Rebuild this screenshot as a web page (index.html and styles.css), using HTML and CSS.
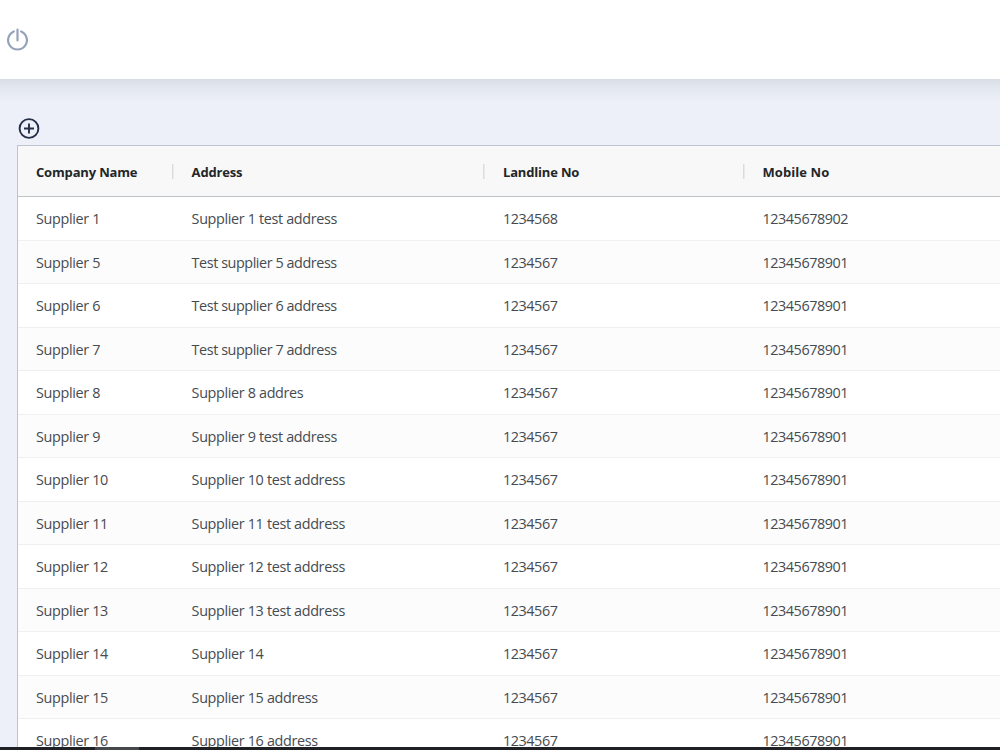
FILE: index.html
```
<!DOCTYPE html>
<html lang="en">
<head>
<meta charset="utf-8">
<title>Suppliers</title>
<link rel="stylesheet" href="styles.css">
</head>
<body>
<div class="app">
  <header class="topbar">
    <button class="icon-button" aria-label="Log out">
      <svg class="power-icon" viewBox="0 0 24 24"><path d="M8.2 3.6A9.8 9.8 0 1 0 15.8 3.6M12 1.6v11.4"/></svg>
    </button>
  </header>
  <main class="content">
    <button class="icon-button" aria-label="Add supplier">
      <svg class="add-icon" viewBox="0 0 22 22"><circle cx="11" cy="11.5" r="9.4"/><path d="M11 6.5v10M6 11.5h10"/></svg>
    </button>
    <div class="grid">
      <div class="row head"><span>Company Name</span><span>Address</span><span>Landline No</span><span class="wide">Mobile No</span></div>
      <div class="row"><span>Supplier 1</span><span>Supplier 1 test address</span><span class="num">1234568</span><span class="num">12345678902</span></div>
      <div class="row"><span>Supplier 5</span><span class="tight">Test supplier 5 address</span><span class="num">1234567</span><span class="num">12345678901</span></div>
      <div class="row"><span>Supplier 6</span><span class="tight">Test supplier 6 address</span><span class="num">1234567</span><span class="num">12345678901</span></div>
      <div class="row"><span>Supplier 7</span><span class="tight">Test supplier 7 address</span><span class="num">1234567</span><span class="num">12345678901</span></div>
      <div class="row"><span>Supplier 8</span><span>Supplier 8 addres</span><span class="num">1234567</span><span class="num">12345678901</span></div>
      <div class="row"><span>Supplier 9</span><span>Supplier 9 test address</span><span class="num">1234567</span><span class="num">12345678901</span></div>
      <div class="row"><span>Supplier 10</span><span>Supplier 10 test address</span><span class="num">1234567</span><span class="num">12345678901</span></div>
      <div class="row"><span>Supplier 11</span><span>Supplier 11 test address</span><span class="num">1234567</span><span class="num">12345678901</span></div>
      <div class="row"><span>Supplier 12</span><span>Supplier 12 test address</span><span class="num">1234567</span><span class="num">12345678901</span></div>
      <div class="row"><span>Supplier 13</span><span>Supplier 13 test address</span><span class="num">1234567</span><span class="num">12345678901</span></div>
      <div class="row"><span>Supplier 14</span><span>Supplier 14</span><span class="num">1234567</span><span class="num">12345678901</span></div>
      <div class="row"><span>Supplier 15</span><span>Supplier 15 address</span><span class="num">1234567</span><span class="num">12345678901</span></div>
      <div class="row"><span>Supplier 16</span><span>Supplier 16 address</span><span class="num">1234567</span><span class="num">12345678901</span></div>
    </div>
  </main>
  <footer class="taskbar"><div class="taskbar-item"></div></footer>
</div>
</body>
</html>
```
FILE: styles.css
```
* { box-sizing: border-box; }
body {
  margin: 0;
  font-family: "Segoe UI", "Open Sans", "Noto Sans", sans-serif;
}
.app {
  height: 750px;
  display: flex;
  flex-direction: column;
  overflow: hidden;
  background: #edf0f9;
}
.topbar {
  flex: none;
  height: 79px;
  padding: 28px 0 0 6px;
  background: #fff;
}
.icon-button {
  display: block;
  padding: 0;
  border: 0;
  background: none;
}
.icon-button svg {
  display: block;
  fill: none;
}
.power-icon {
  width: 23px;
  height: 23px;
  stroke: #95a2b8;
  stroke-width: 2.3;
  stroke-linecap: round;
}
.add-icon {
  width: 22px;
  height: 22px;
  margin-left: 1px;
  stroke: #252d47;
  stroke-width: 1.9;
}
.content {
  flex: 1;
  min-height: 0;
  overflow: hidden;
  padding: 38px 0 0 17px;
  background: linear-gradient(#d9dde6, #e2e6ee 8px, #edf0f9 23px);
}
.grid {
  width: 1000px;
  margin-top: 6px;
  border: 1px solid #bdc3d1;
  background: #fff;
}
.row {
  display: grid;
  grid-template-columns: 155.6px 311.4px 259.5px 1fr;
  align-items: center;
  height: 43.5px;
  padding: 1.8px 0 0 18px;
  border-bottom: 1px solid #eef0f1;
  font-size: 14.4px;
  line-height: 20px;
  letter-spacing: -0.35px;
  color: #464b50;
  white-space: nowrap;
}
.row:nth-child(odd) { background: #fcfcfd; }
.num { letter-spacing: -0.45px; }
.tight { letter-spacing: -0.44px; }
.row.head {
  height: 51px;
  padding-top: 2px;
  border-bottom-color: #bdc3c7;
  background: #f8f8f8;
  font-size: 13px;
  font-weight: 700;
  letter-spacing: -0.17px;
  color: #222628;
}
.head .wide { letter-spacing: 0.08px; }
.head span:not(:last-child) {
  background: linear-gradient(#d9dddf, #d9dddf) right 18px top 2px / 1.5px 15px no-repeat;
}
.taskbar {
  flex: none;
  height: 3px;
  padding-left: 95px;
  background: #202124;
}
.taskbar-item {
  width: 44px;
  height: 3px;
  background: #47484b;
}
```
